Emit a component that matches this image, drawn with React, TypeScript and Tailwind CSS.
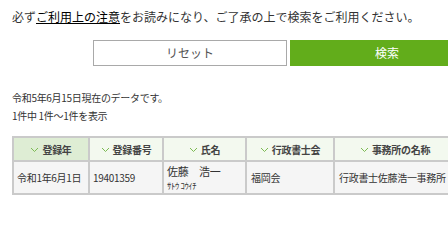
function Chevron() {
  return (
    <svg width="9" height="6" viewBox="0 0 9 6" className="inline-block mr-[3px] mb-[1px]">
      <polyline points="1,1 4.5,4.5 8,1" fill="none" stroke="#7cbb52" strokeWidth="1" />
    </svg>
  );
}

const headers = [
  { label: "登録年", w: "w-[76px]", active: true },
  { label: "登録番号", w: "w-[74px]", active: false },
  { label: "氏名", w: "w-[83px]", active: false },
  { label: "行政書士会", w: "w-[88px]", active: false },
  { label: "事務所の名称", w: "w-[122px]", active: false },
];

export default function App() {
  return (
    <div className="w-[448px] h-[250px] overflow-hidden bg-white text-[#333] font-['Noto_Sans_CJK_JP',sans-serif]">
      <p className="pl-3 pt-[9px] text-[12px] leading-[16px] whitespace-nowrap">
        必ず<a className="underline text-black">ご利用上の注意</a>をお読みになり、ご了承の上で検索をご利用ください。
      </p>

      <div className="flex gap-[3px] pl-[93px] mt-[15px] w-[700px]">
        <button className="w-[194px] h-[26px] border border-[#a9a9a9] bg-white text-[12px] text-[#555]">
          リセット
        </button>
        <button className="w-[194px] h-[26px] bg-[#62ad1b] text-white text-[12px]">検索</button>
      </div>

      <div className="pl-3 mt-[23px] text-[10px] leading-[18px] tracking-[-0.3px]">
        <p>令和5年6月15日現在のデータです。</p>
        <p>1件中 1件～1件を表示</p>
      </div>

      <div className="pl-3 mt-[11px] w-[600px]">
        <table className="table-fixed border-collapse text-[10px] tracking-[-0.3px]">
          <thead>
            <tr className="h-[24px]">
              {headers.map((h) => (
                <th
                  key={h.label}
                  className={`${h.w} border-2 border-[#cacaca] font-bold text-[#444] text-center ${
                    h.active ? "bg-[#deedd4]" : "bg-[#f3f9ef]"
                  }`}
                >
                  <Chevron />
                  {h.label}
                </th>
              ))}
            </tr>
          </thead>
          <tbody>
            <tr className="h-[33px] bg-[#f5f5f5] text-[#333]">
              <td className="border-2 border-[#cacaca] px-[3px] whitespace-nowrap">令和1年6月1日</td>
              <td className="border-2 border-[#cacaca] px-[3px]">19401359</td>
              <td className="border-2 border-[#cacaca] px-[3px] py-[1px]">
                <div className="text-[11px] leading-[15px]">佐藤　浩一</div>
                <div className="text-[8.5px] leading-[13px]">ｻﾄｳ ｺｳｲﾁ</div>
              </td>
              <td className="border-2 border-[#cacaca] px-[4px]">福岡会</td>
              <td className="border-2 border-[#cacaca] px-[4px] whitespace-nowrap">行政書士佐藤浩一事務所</td>
            </tr>
          </tbody>
        </table>
      </div>
    </div>
  );
}
